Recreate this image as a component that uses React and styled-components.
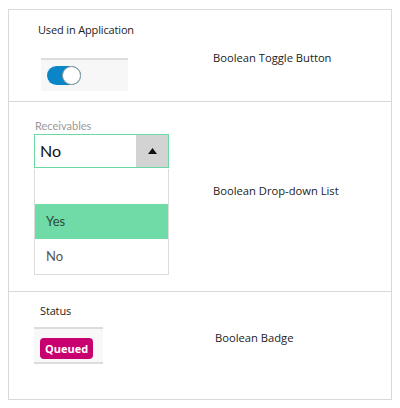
import React from 'react'
import styled, { createGlobalStyle } from 'styled-components'

const GlobalStyle = createGlobalStyle`
  html, body {
    margin: 0;
    padding: 0;
    background: #fff;
  }
  body {
    font-family: 'Open Sans', 'Noto Sans', sans-serif;
    color: #222;
  }
`

const Page = styled.div`
  padding: 9px 8px 8px 8px;
`

const Table = styled.div`
  width: 384px;
  border: 1px solid #d9d9d9;
  box-sizing: border-box;
`

const Row = styled.div`
  display: grid;
  grid-template-columns: 204px 1fr;
  height: ${({ height }) => height}px;
  box-sizing: border-box;
  border-top: ${({ first }) => (first ? 'none' : '1px solid #d9d9d9')};
`

const Cell = styled.div`
  display: flex;
  flex-direction: column;
  align-items: flex-start;
  padding-top: ${({ top }) => top}px;
  padding-left: ${({ left }) => left}px;
`

const Label = styled.div`
  font-size: 11px;
  line-height: 16px;
  letter-spacing: -0.15px;
  color: #222;
`

const Description = styled.div`
  font-size: 11.2px;
  line-height: 16px;
  color: #222;
`

const ToggleHolder = styled.div`
  margin-top: 20px;
  margin-left: 3px;
  width: 87px;
  height: 33px;
  box-sizing: border-box;
  background: #f7f7f7;
  border-top: 2px solid #dcdcdc;
  padding: 6px 0 0 6px;
`

const Track = styled.div`
  position: relative;
  width: 34px;
  height: 19px;
  border-radius: 10px;
  background: #0a86c8;
`

const Knob = styled.div`
  position: absolute;
  right: 0;
  top: 0;
  width: 19px;
  height: 19px;
  box-sizing: border-box;
  border-radius: 50%;
  background: #fff;
  border: 1.5px solid #9a9a9a;
`

const FieldLabel = styled.div`
  font-family: Lato, 'Open Sans', sans-serif;
  font-size: 11px;
  line-height: 14px;
  color: #9a9a9a;
  margin-left: 1px;
`

const Select = styled.div`
  margin-top: 1px;
  width: 135px;
  height: 34px;
  box-sizing: border-box;
  border: 1px solid #6cd9a5;
  display: flex;
`

const SelectValue = styled.div`
  flex: 1;
  font-family: Lato, 'Open Sans', sans-serif;
  font-size: 16px;
  line-height: 32px;
  padding-left: 5px;
  color: #111;
`

const ArrowButton = styled.div`
  width: 32px;
  background: #d3d3d3;
  display: flex;
  align-items: center;
  justify-content: center;
`

const List = styled.div`
  width: 135px;
  box-sizing: border-box;
  border: 1px solid #dcdcdc;
  border-top: none;
  margin-top: 1px;
`

const Option = styled.div`
  height: 35px;
  font-family: Lato, 'Open Sans', sans-serif;
  font-size: 13px;
  line-height: 35px;
  padding-left: 11px;
  color: ${({ selected }) => (selected ? '#2e4a3b' : '#555')};
  background: ${({ selected }) => (selected ? '#6fdba7' : '#fff')};
`

const BadgeHolder = styled.div`
  margin-top: 8px;
  margin-left: -6px;
  width: 69px;
  height: 37px;
  box-sizing: border-box;
  background: #f8f8f8;
  border-top: 2px solid #dcdcdc;
  border-bottom: 2px solid #dcdcdc;
  padding: 7px 0 0 6px;
`

const Badge = styled.span`
  display: inline-block;
  height: 21px;
  padding: 0 5px;
  border-radius: 4px;
  background: #c8006f;
  color: #fff;
  font-size: 11px;
  font-weight: 700;
  line-height: 21px;
`

export default function App() {
  return (
    <>
      <GlobalStyle />
      <Page>
        <Table>
          <Row first height={91}>
            <Cell top={12} left={29}>
              <Label>Used in Application</Label>
              <ToggleHolder>
                <Track>
                  <Knob />
                </Track>
              </ToggleHolder>
            </Cell>
            <Cell top={40} left={0}>
              <Description>Boolean Toggle Button</Description>
            </Cell>
          </Row>
          <Row height={190}>
            <Cell top={17} left={25}>
              <FieldLabel>Receivables</FieldLabel>
              <Select>
                <SelectValue>No</SelectValue>
                <ArrowButton>
                  <svg width="9" height="6" viewBox="0 0 9 6">
                    <path d="M0 6 L4.5 0 L9 6 Z" fill="#111" />
                  </svg>
                </ArrowButton>
              </Select>
              <List>
                <Option />
                <Option selected>Yes</Option>
                <Option>No</Option>
              </List>
            </Cell>
            <Cell top={81} left={0}>
              <Description>Boolean Drop-down List</Description>
            </Cell>
          </Row>
          <Row height={108}>
            <Cell top={11} left={31}>
              <Label>Status</Label>
              <BadgeHolder>
                <Badge>Queued</Badge>
              </BadgeHolder>
            </Cell>
            <Cell top={38} left={2}>
              <Description>Boolean Badge</Description>
            </Cell>
          </Row>
        </Table>
      </Page>
    </>
  )
}
